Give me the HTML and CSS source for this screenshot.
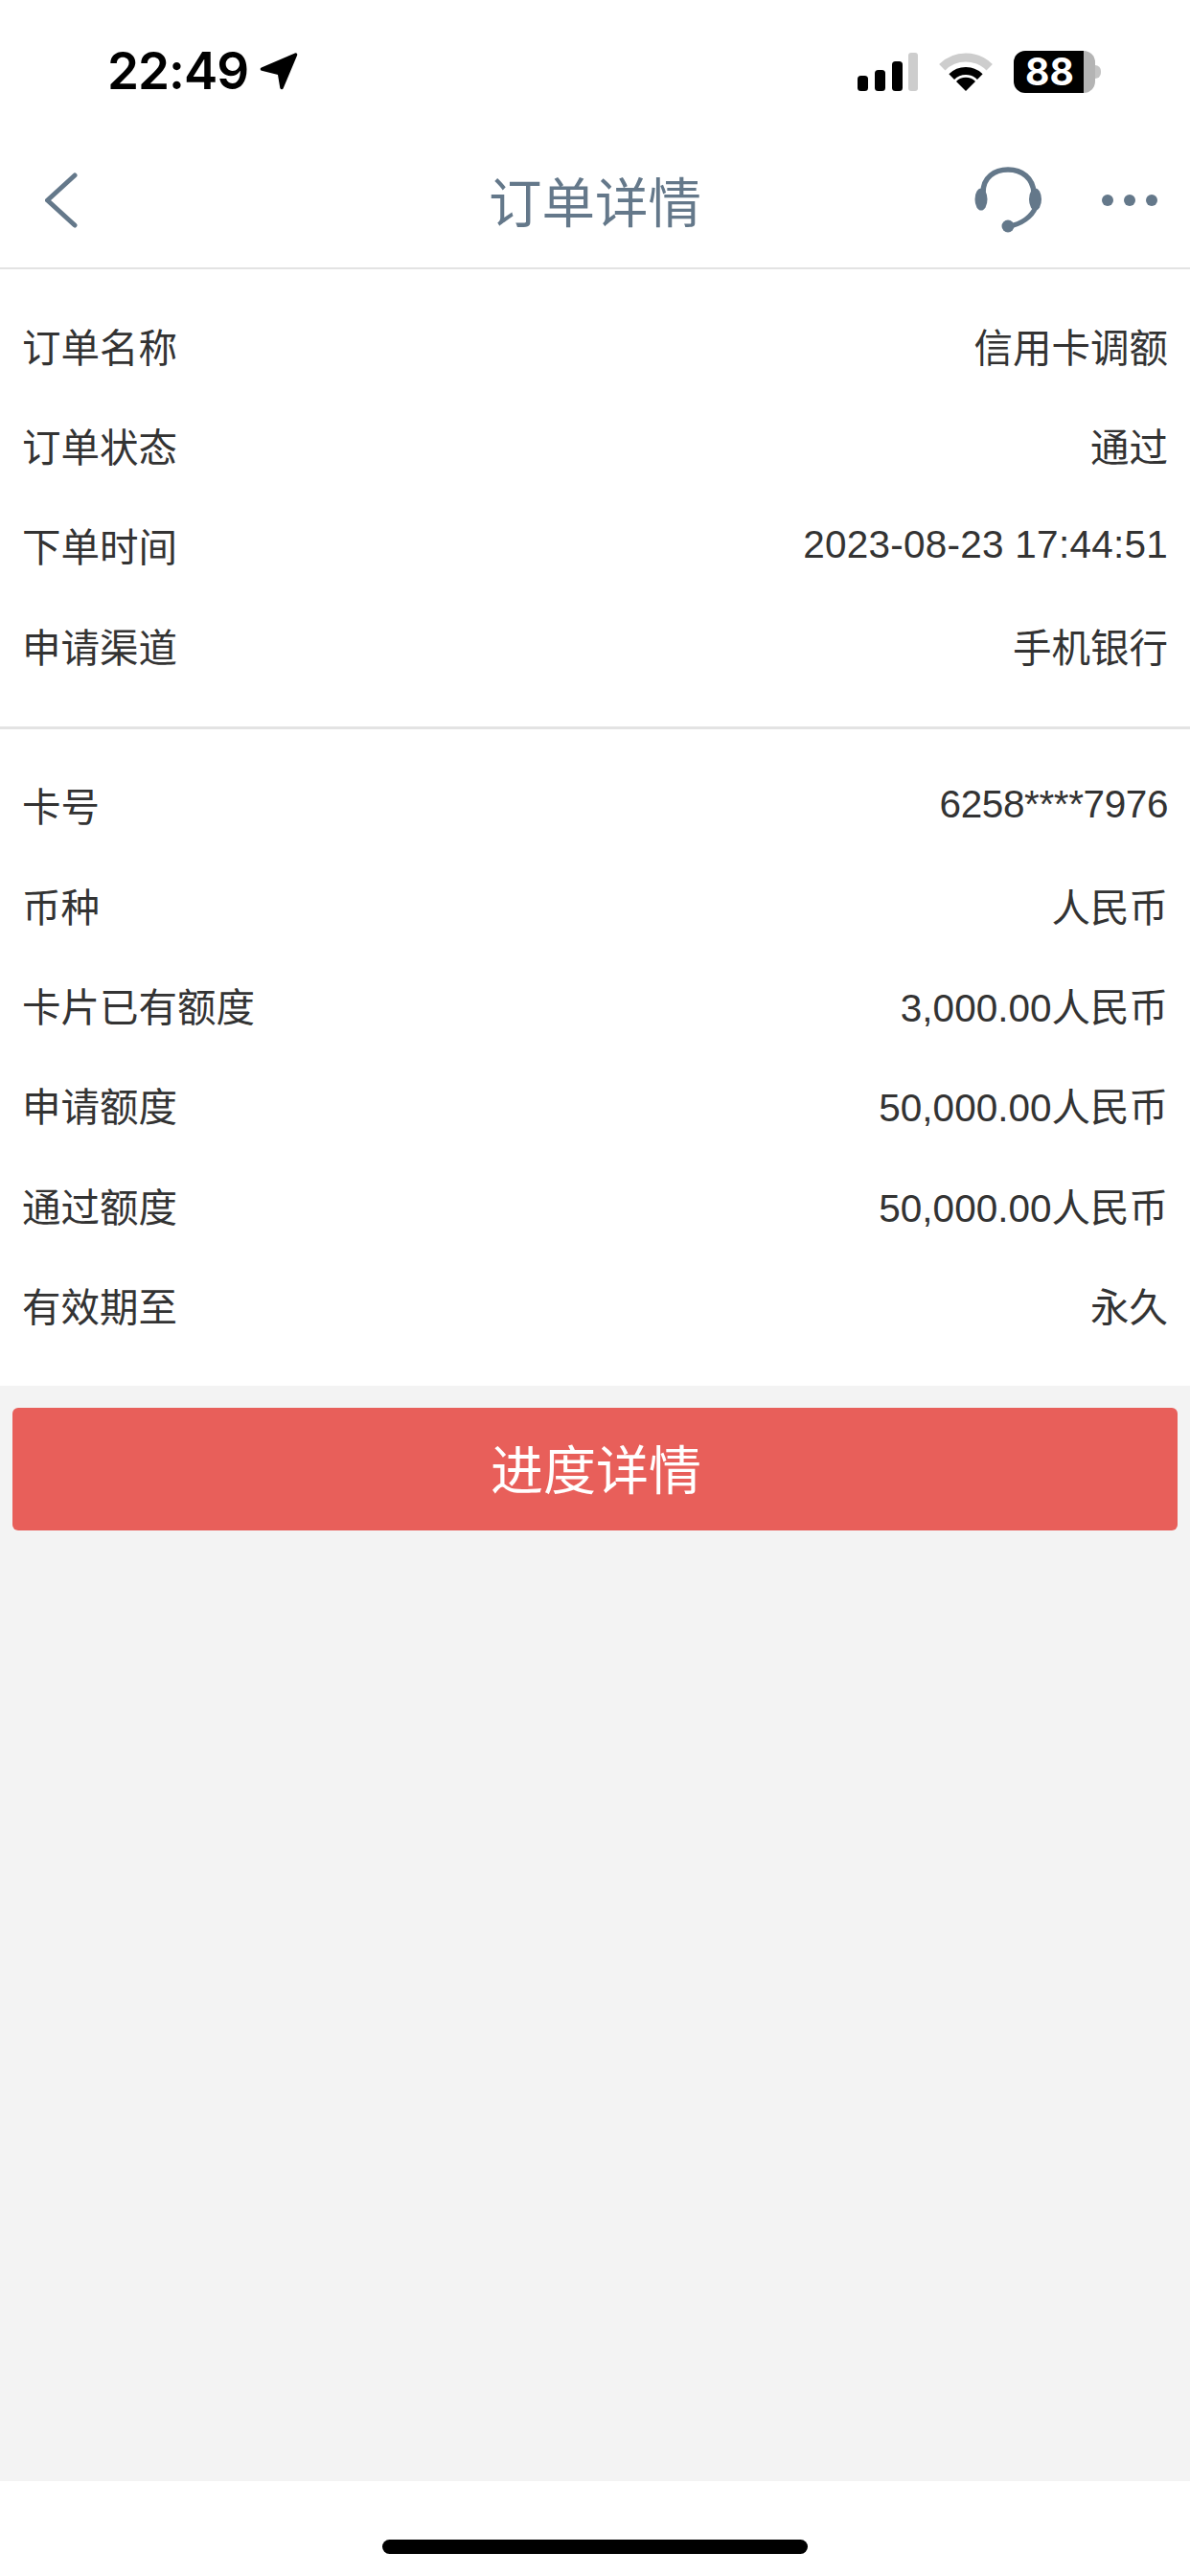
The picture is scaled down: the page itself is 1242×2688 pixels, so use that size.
FILE: index.html
```html
<!DOCTYPE html>
<html lang="zh-CN">
<head>
    <meta charset="UTF-8">
    <title>订单详情</title>
    <link rel="stylesheet" href="styles.css">
</head>
<body>
    <section class="page">
        <div class="status-bar">
            <div class="status-left">
                <span class="clock">22:49</span>
                <svg class="arrow" width="40" height="39" viewBox="0 0 40 39">
                    <path d="M2.5 17 L37.5 2 L23 36.5 L20.5 21.5 Z" fill="#000" stroke="#000" stroke-width="3.5" stroke-linejoin="round"/>
                </svg>
            </div>
            <div class="status-right">
                <svg width="63" height="40" viewBox="0 0 63 40">
                    <rect x="0" y="24" width="11" height="16" rx="3.5" fill="#000"/>
                    <rect x="18" y="18" width="11" height="22" rx="3.5" fill="#000"/>
                    <rect x="36" y="9" width="11" height="31" rx="3.5" fill="#000"/>
                    <rect x="53" y="0" width="10" height="40" rx="3" fill="#cdcdcd"/>
                </svg>
                <svg width="56" height="40" viewBox="0 0 56 40">
                    <path d="M3.3 15.3 A35 35 0 0 1 52.7 15.3" fill="none" stroke="#cdcdcd" stroke-width="9"/>
                    <path d="M13.2 25.2 A21 21 0 0 1 42.8 25.2" fill="none" stroke="#000" stroke-width="8"/>
                    <path d="M28 40 L18 30 A14 14 0 0 1 38 30 Z" fill="#000"/>
                </svg>
                <div class="battery">
                    <div class="battery-body">
                        <span class="battery-level">88</span>
                    </div>
                    <span class="battery-nub"></span>
                </div>
            </div>
        </div>

        <div class="nav">
            <div class="nav-left">
                <svg width="34" height="58" viewBox="0 0 34 58">
                    <path d="M31 3 L2.5 29 L31 55" fill="none" stroke="#64788a" stroke-width="5" stroke-linecap="round" stroke-linejoin="round"/>
                </svg>
            </div>
            <span class="nav-title">订单详情</span>
            <div class="nav-right">
                <svg width="70" height="70" viewBox="0 0 70 70">
                    <path d="M9 27 C9 11 21 3 35 3 C50 3 61 12 62 27" fill="none" stroke="#64788a" stroke-width="5.5"/>
                    <path d="M64 42 C60 52 49 60 36 62" fill="none" stroke="#64788a" stroke-width="5"/>
                    <ellipse cx="7" cy="34" rx="6.5" ry="11.5" fill="#64788a"/>
                    <ellipse cx="63.5" cy="34" rx="6.5" ry="11.5" fill="#64788a"/>
                    <circle cx="35" cy="62" r="6.5" fill="#64788a"/>
                </svg>
                <div class="more">
                    <span class="dot"></span>
                    <span class="dot"></span>
                    <span class="dot"></span>
                </div>
            </div>
        </div>

        <div class="info-group with-line">
            <div class="info-row"><span>订单名称</span><span>信用卡调额</span></div>
            <div class="info-row"><span>订单状态</span><span>通过</span></div>
            <div class="info-row"><span>下单时间</span><span class="date">2023-08-23 17:44:51</span></div>
            <div class="info-row"><span>申请渠道</span><span>手机银行</span></div>
        </div>

        <div class="info-group">
            <div class="info-row"><span>卡号</span><span class="card-no">6258****7976</span></div>
            <div class="info-row"><span>币种</span><span>人民币</span></div>
            <div class="info-row"><span>卡片已有额度</span><span>3,000.00人民币</span></div>
            <div class="info-row"><span>申请额度</span><span>50,000.00人民币</span></div>
            <div class="info-row"><span>通过额度</span><span>50,000.00人民币</span></div>
            <div class="info-row"><span>有效期至</span><span>永久</span></div>
        </div>

        <div class="content">
            <button class="progress-btn" type="button">进度详情</button>
        </div>

        <div class="home-area">
            <span class="home-bar"></span>
        </div>
    </section>
</body>
</html>
```

FILE: styles.css
```css
* {
    box-sizing: border-box;
    font-family: 'Liberation Sans', 'Noto Sans CJK SC', sans-serif;
}

html, body {
    margin: 0;
    height: 100%;
}

.page {
    display: flex;
    flex-direction: column;
    width: 1242px;
    height: 2688px;
    background-color: #fff;
}

.status-bar {
    display: flex;
    justify-content: space-between;
    align-items: center;
    height: 140px;
    padding: 8px 93px 0 112px;
}

.status-left {
    display: flex;
    align-items: center;
    gap: 12px;
}

.clock {
    font-family: 'Inter', sans-serif;
    font-size: 53px;
    font-weight: 600;
    line-height: 60px;
    letter-spacing: -1px;
    color: #000;
}

.status-right {
    display: flex;
    align-items: flex-end;
    gap: 22px;
}

.battery {
    display: flex;
    align-items: center;
    margin-bottom: -2px;
}

.battery-body {
    width: 85px;
    height: 44px;
    border-radius: 12px;
    background: linear-gradient(to right, #000 73px, #b4b4b4 73px);
}

.battery-level {
    display: block;
    width: 73px;
    padding-left: 2px;
    font-family: 'Inter', sans-serif;
    font-size: 39px;
    font-weight: 700;
    line-height: 44px;
    text-align: center;
    color: #fff;
}

.battery-nub {
    width: 6px;
    height: 14px;
    border-radius: 0 7px 7px 0;
    background-color: #c4c4c4;
}

.nav {
    display: grid;
    grid-template-columns: 1fr auto 1fr;
    align-items: center;
    height: 141px;
    padding: 0 34px 2px;
    border-bottom: 2px solid #e3e3e3;
}

.nav-left {
    display: flex;
    padding-left: 13px;
}

.nav-title {
    font-size: 55.5px;
    line-height: 60px;
    padding-top: 8px;
    color: #64788a;
}

.nav-right {
    display: flex;
    justify-content: flex-end;
    align-items: center;
    gap: 63px;
}

.more {
    display: flex;
    gap: 11px;
}

.dot {
    width: 12px;
    height: 12px;
    border-radius: 50%;
    background-color: #64788a;
}

.info-group {
    padding: 29px 23px 30px;
}

.with-line {
    border-bottom: 3px solid #e3e3e3;
}

.info-row {
    display: flex;
    justify-content: space-between;
    align-items: center;
    height: 104.4px;
    padding-bottom: 4px;
    font-size: 40.5px;
    color: #333;
}

.date {
    letter-spacing: 0.25px;
}

.card-no {
    letter-spacing: -0.4px;
}

.content {
    flex: 1;
    padding: 23px 13px 0;
    background-color: #f3f3f3;
}

.progress-btn {
    display: block;
    width: 100%;
    height: 128px;
    padding: 0 0 5px 2px;
    border: 0;
    border-radius: 6px;
    font-size: 55px;
    color: #fff;
    background-color: #e85f5a;
}

.home-area {
    display: flex;
    justify-content: center;
    height: 99px;
    padding-top: 61px;
}

.home-bar {
    width: 444px;
    height: 15px;
    border-radius: 8px;
    background-color: #000;
}
```
